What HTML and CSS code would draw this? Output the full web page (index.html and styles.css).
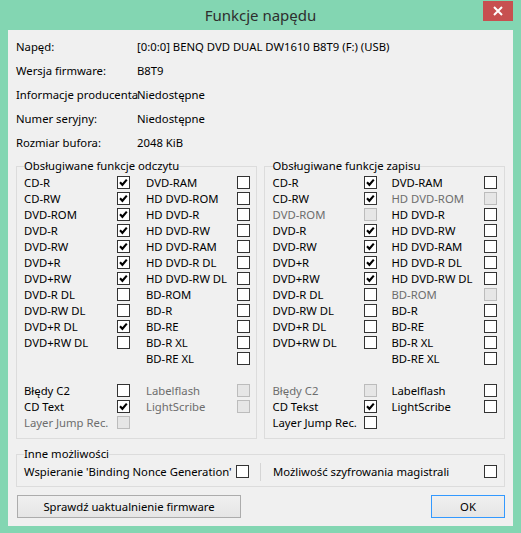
FILE: index.html
```html
<!DOCTYPE html>
<html lang="pl">
<head>
<meta charset="utf-8">
<title>Funkcje napędu</title>
<link rel="stylesheet" href="styles.css">
</head>
<body>
<div class="window">
  <div class="titlebar">
    <div class="spacer"></div>
    <div class="title">Funkcje napędu</div>
    <div class="close"><svg width="10" height="10" viewBox="0 0 10 10"><path d="M1 1 L9 9 M9 1 L1 9" stroke="#fff" stroke-width="2"/></svg></div>
  </div>
  <div class="content">
    <div class="info">
      <div class="lbl">Napęd:</div><div>[0:0:0] BENQ DVD DUAL DW1610 B8T9 (F:) (USB)</div>
      <div class="lbl">Wersja firmware:</div><div>B8T9</div>
      <div class="lbl">Informacje producenta</div><div>Niedostępne</div>
      <div class="lbl">Numer seryjny:</div><div>Niedostępne</div>
      <div class="lbl">Rozmiar bufora:</div><div>2048 KiB</div>
    </div>
    <div class="groups">
      <fieldset class="grp read">
        <legend>Obsługiwane funkcje odczytu</legend>
        <div class="grid">
          <span>CD-R</span><span class="cb on"></span><span>DVD-RAM</span><span class="cb"></span>
          <span>CD-RW</span><span class="cb on"></span><span>HD DVD-ROM</span><span class="cb"></span>
          <span>DVD-ROM</span><span class="cb on"></span><span>HD DVD-R</span><span class="cb"></span>
          <span>DVD-R</span><span class="cb on"></span><span>HD DVD-RW</span><span class="cb"></span>
          <span>DVD-RW</span><span class="cb on"></span><span>HD DVD-RAM</span><span class="cb"></span>
          <span>DVD+R</span><span class="cb on"></span><span>HD DVD-R DL</span><span class="cb"></span>
          <span>DVD+RW</span><span class="cb on"></span><span>HD DVD-RW DL</span><span class="cb"></span>
          <span>DVD-R DL</span><span class="cb"></span><span>BD-ROM</span><span class="cb"></span>
          <span>DVD-RW DL</span><span class="cb"></span><span>BD-R</span><span class="cb"></span>
          <span>DVD+R DL</span><span class="cb on"></span><span>BD-RE</span><span class="cb"></span>
          <span>DVD+RW DL</span><span class="cb"></span><span>BD-R XL</span><span class="cb"></span>
          <span></span><span></span><span>BD-RE XL</span><span class="cb"></span>
          <span></span><span></span><span></span><span></span>
          <span>Błędy C2</span><span class="cb"></span><span class="dis">Labelflash</span><span class="cb dcb"></span>
          <span>CD Text</span><span class="cb on"></span><span class="dis">LightScribe</span><span class="cb dcb"></span>
          <span class="dis">Layer Jump Rec.</span><span class="cb dcb"></span><span></span><span></span>
        </div>
      </fieldset>
      <fieldset class="grp write">
        <legend>Obsługiwane funkcje zapisu</legend>
        <div class="grid">
          <span>CD-R</span><span class="cb on"></span><span>DVD-RAM</span><span class="cb"></span>
          <span>CD-RW</span><span class="cb on"></span><span class="dis">HD DVD-ROM</span><span class="cb dcb"></span>
          <span class="dis">DVD-ROM</span><span class="cb dcb"></span><span>HD DVD-R</span><span class="cb"></span>
          <span>DVD-R</span><span class="cb on"></span><span>HD DVD-RW</span><span class="cb"></span>
          <span>DVD-RW</span><span class="cb on"></span><span>HD DVD-RAM</span><span class="cb"></span>
          <span>DVD+R</span><span class="cb on"></span><span>HD DVD-R DL</span><span class="cb"></span>
          <span>DVD+RW</span><span class="cb on"></span><span>HD DVD-RW DL</span><span class="cb"></span>
          <span>DVD-R DL</span><span class="cb"></span><span class="dis">BD-ROM</span><span class="cb dcb"></span>
          <span>DVD-RW DL</span><span class="cb"></span><span>BD-R</span><span class="cb"></span>
          <span>DVD+R DL</span><span class="cb"></span><span>BD-RE</span><span class="cb"></span>
          <span>DVD+RW DL</span><span class="cb"></span><span>BD-R XL</span><span class="cb"></span>
          <span></span><span></span><span>BD-RE XL</span><span class="cb"></span>
          <span></span><span></span><span></span><span></span>
          <span class="dis">Błędy C2</span><span class="cb dcb"></span><span>Labelflash</span><span class="cb"></span>
          <span>CD Tekst</span><span class="cb on"></span><span>LightScribe</span><span class="cb"></span>
          <span>Layer Jump Rec.</span><span class="cb"></span><span></span><span></span>
        </div>
      </fieldset>
    </div>
    <fieldset class="grp other">
      <legend>Inne możliwości</legend>
      <div class="other-row">
        <span class="o1">Wspieranie 'Binding Nonce Generation'</span><span class="cb"></span>
        <span class="sep"></span>
        <span class="o2">Możliwość szyfrowania magistrali</span><span class="cb"></span>
      </div>
    </fieldset>
    <div class="buttons">
      <button class="btn firmware">Sprawdź uaktualnienie firmware</button>
      <button class="btn ok">OK</button>
    </div>
  </div>
</div>
</body>
</html>
```

FILE: styles.css
```css
* { box-sizing: border-box; }
html, body { margin: 0; padding: 0; }
body {
  width: 521px;
  height: 533px;
  overflow: hidden;
  font-family: "Noto Sans", "DejaVu Sans", sans-serif;
  font-size: 11.3px;
  color: #000;
}
.window {
  width: 521px;
  height: 533px;
  background: #83D6B2;
  display: flex;
  flex-direction: column;
}
.titlebar {
  height: 30px;
  display: flex;
  align-items: flex-start;
}
.spacer { width: 38px; }
.title {
  flex: 1;
  text-align: center;
  font-size: 15px;
  line-height: 30px;
  color: #2E2E2E;
}
.close {
  width: 30px;
  height: 20px;
  margin-top: 1px;
  margin-right: 8px;
  background: #C75050;
  display: flex;
  align-items: center;
  justify-content: center;
}
.content {
  margin: 0 8px;
  height: 496px;
  background: #F0F0F0;
  padding: 4px 8px 0 8px;
}
.info {
  display: grid;
  grid-template-columns: 121px 1fr;
  grid-auto-rows: 24px;
  align-items: center;
  white-space: nowrap;
}
.groups {
  display: flex;
  gap: 7px;
  margin-top: 4px;
}
fieldset.grp {
  margin: 0;
  border: 1px solid #DCDCDC;
  padding: 0 6px 8px 7px;
  min-width: 0;
}
fieldset.grp legend {
  padding: 0;
  margin-left: 0;
  line-height: 16px;
  height: 16px;
}
fieldset.read { width: 241px; }
fieldset.write { width: 242px; padding-left: 8px; }
.grid {
  display: grid;
  grid-auto-rows: 16px;
  align-items: center;
  white-space: nowrap;
}
.read .grid { grid-template-columns: 93px 13px 16px 91px 13px; }
.write .grid { grid-template-columns: 91px 13px 15px 92px 13px; }
.grid > span:nth-child(4n+1) { grid-column: 1; }
.grid > span:nth-child(4n+2) { grid-column: 2; }
.grid > span:nth-child(4n+3) { grid-column: 4; }
.grid > span:nth-child(4n+4) { grid-column: 5; }
.cb {
  width: 13px;
  height: 13px;
  border: 1px solid #333;
  background: #fff;
  display: block;
  flex: none;
}
.cb.on {
  background: #fff url("data:image/svg+xml;utf8,<svg xmlns='http://www.w3.org/2000/svg' width='11' height='11' viewBox='0 0 11 11'><path d='M2 5.2 L4.4 7.8 L8.8 2.6' fill='none' stroke='black' stroke-width='2.1'/></svg>") no-repeat center;
}
.cb.dcb {
  border-color: #BCBCBC;
  background: #E6E6E6;
}
.dis { color: #6D6D6D; }
fieldset.other {
  margin-top: 7px;
  padding: 0 7px 6px 7px;
}
.other-row {
  display: flex;
  align-items: center;
  height: 17px;
  white-space: nowrap;
  margin-top: 1px;
}
.o1 { width: 212px; }
.sep {
  width: 1px;
  height: 18px;
  background: #D5D5D5;
  margin: 0 12px 0 11px;
}
.o2 { width: 211px; }
.buttons {
  display: flex;
  justify-content: space-between;
  margin-top: 8px;
  padding-left: 1px;
}
.btn {
  font: inherit;
  height: 23px;
  padding: 0;
  border: 1px solid #ACACAC;
  background: linear-gradient(#F0F0F0, #E5E5E5);
  color: #000;
}
.firmware { width: 224px; }
.ok { width: 74px; border-color: #3399FF; }
```
